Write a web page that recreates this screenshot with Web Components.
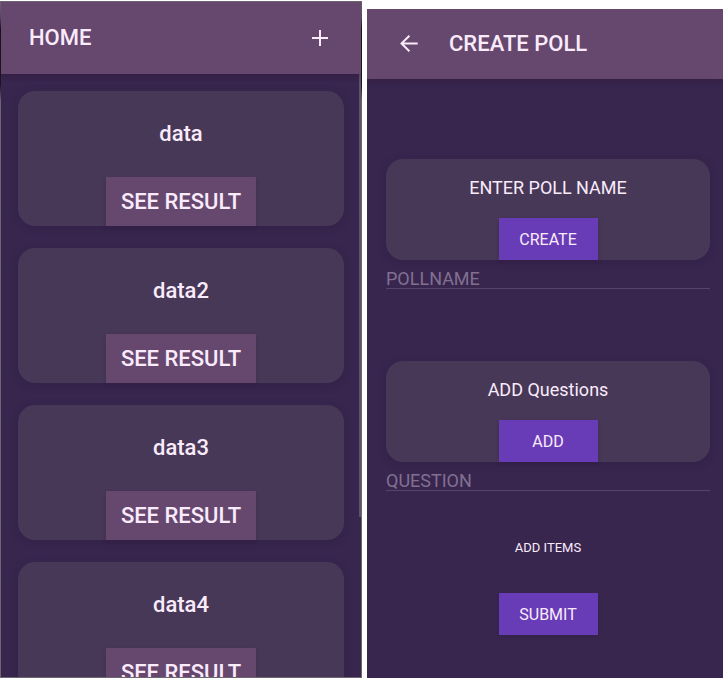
<!DOCTYPE html>
<html lang="en">
<head>
<meta charset="utf-8">
<meta name="viewport" content="width=device-width, initial-scale=1">
<title>Polls</title>
<style>
  body { margin: 0; background: #fff; font-family: Roboto, "Liberation Sans", sans-serif; color: #faebfb; }
</style>
</head>
<body>
<poll-app></poll-app>
<script>
const define = (name, html, setup) => {
  const template = document.createElement('template');
  template.innerHTML = html;
  customElements.define(name, class extends HTMLElement {
    constructor() {
      super();
      this.attachShadow({ mode: 'open' }).append(template.content.cloneNode(true));
    }
    connectedCallback() { if (setup) setup(this, this.shadowRoot); }
  });
};

define('app-bar', `
  <style>
    :host { display: flex; align-items: center; flex: none; box-sizing: border-box; background: #66476e;
            padding: 0 28px; box-shadow: 0 2px 6px rgba(50, 20, 50, .45); position: relative; }
    h1 { margin: 0; flex: 1; font-size: 22px; line-height: 28px; font-weight: 500; }
  </style>
  <slot name="start"></slot><h1><slot></slot></h1><slot name="end"></slot>
`);

define('icon-button', `
  <style>
    :host { display: block; flex: none; }
    button { display: block; margin: 0; padding: 0; border: 0; background: none; color: inherit; cursor: pointer; }
    svg { display: none; width: 26px; height: 26px; fill: none; stroke: currentColor; stroke-width: 2; }
    :host([icon="add"]) .add, :host([icon="back"]) .back { display: block; }
  </style>
  <button type="button">
    <svg class="add" viewBox="0 0 26 26" aria-hidden="true"><path d="M13 5v16M5 13h16"/></svg>
    <svg class="back" viewBox="0 0 26 26" aria-hidden="true"><path d="M22.7 12.5H6.5M14.4 4.7L6.5 12.5l7.9 7.8"/></svg>
  </button>
`, (host, root) => root.querySelector('button').setAttribute('aria-label', host.getAttribute('label')));

define('flat-button', `
  <style>
    :host { display: block; }
    button { display: block; margin: 0; box-sizing: border-box; border: 0; cursor: pointer; font: inherit; color: inherit;
             min-width: 99px; height: 42px; padding: 0 12px; font-size: 16px; background: #683bb7;
             box-shadow: 0 2px 4px rgba(40, 20, 50, .2); }
    :host([kind="result"]) button { height: 49px; padding: 0 15px; font-size: 22px; font-weight: 500; background: #66476e; }
    :host([kind="text"]) button { height: 29px; font-size: 13px; background: none; box-shadow: none; }
  </style>
  <button type="button"><slot></slot></button>
`);

define('poll-card', `
  <style>
    :host { display: flex; flex-direction: column; align-items: center; flex: none; border-radius: 17px;
            background: #473857; box-shadow: 0 2px 8px rgba(40, 20, 50, .25); }
    h2 { margin: 0; padding: 17px 0 18px; font-size: 18px; line-height: 24px; font-weight: 400; }
    :host([large]) h2 { padding: 29px 0; font-size: 22px; line-height: 28px; font-weight: 500; }
  </style>
  <h2><slot></slot></h2>
  <slot name="action"></slot>
`);

define('line-input', `
  <style>
    :host { display: block; }
    input { display: block; width: 100%; height: 29px; box-sizing: border-box; margin: 0; padding: 8px 0 0; border: 0;
            border-bottom: 1px solid #574569; border-radius: 0; background: none; outline: none;
            font: inherit; font-size: 18px; color: inherit; }
    input::placeholder { color: #827091; opacity: 1; }
  </style>
  <input type="text">
`, (host, root) => {
  const input = root.querySelector('input');
  input.placeholder = host.getAttribute('label');
  input.setAttribute('aria-label', input.placeholder);
});

define('home-screen', `
  <style>
    :host { display: flex; flex-direction: column; box-sizing: border-box; min-height: 0; padding: 1px;
            background: linear-gradient(#6b6670, #57475f 16px, #171222 28px, #1b1525 84px, #6b6670 100px); }
    app-bar { height: 72px; z-index: 1; clip-path: inset(0 0 -8px 0); }
    .list { flex: 1; min-height: 0; overflow: hidden; display: grid; grid-template-columns: 1fr 2px; background: #38264f; }
    .cards { display: flex; flex-direction: column; gap: 22px; min-width: 0; padding: 17px 15px 17px 17px; }
    .thumb { height: 443px; background: #5d536c; }
  </style>
  <app-bar>HOME<icon-button slot="end" icon="add" label="Add poll"></icon-button></app-bar>
  <div class="list">
    <div class="cards">
      <poll-card large>data<flat-button slot="action" kind="result">SEE RESULT</flat-button></poll-card>
      <poll-card large>data2<flat-button slot="action" kind="result">SEE RESULT</flat-button></poll-card>
      <poll-card large>data3<flat-button slot="action" kind="result">SEE RESULT</flat-button></poll-card>
      <poll-card large>data4<flat-button slot="action" kind="result">SEE RESULT</flat-button></poll-card>
    </div>
    <div class="thumb"></div>
  </div>
`);

define('create-screen', `
  <style>
    :host { display: flex; flex-direction: column; min-width: 0; background: #38264f; }
    app-bar { height: 70px; clip-path: inset(0 0 -8px 0); }
    icon-button { margin-right: 28px; }
    form { display: flex; flex-direction: column; padding: 80px 13px 40px 19px; }
    line-input { margin-bottom: 72px; }
    line-input.last { margin-bottom: 42px; }
    .row { display: flex; justify-content: center; margin-bottom: 31px; }
  </style>
  <app-bar><icon-button slot="start" icon="back" label="Back"></icon-button>CREATE POLL</app-bar>
  <form>
    <poll-card>ENTER POLL NAME<flat-button slot="action">CREATE</flat-button></poll-card>
    <line-input label="POLLNAME"></line-input>
    <poll-card>ADD Questions<flat-button slot="action">ADD</flat-button></poll-card>
    <line-input class="last" label="QUESTION"></line-input>
    <div class="row"><flat-button kind="text">ADD ITEMS</flat-button></div>
    <div class="row"><flat-button>SUBMIT</flat-button></div>
  </form>
`);

define('poll-app', `
  <style>
    :host { display: grid; grid-template-columns: 362fr 356fr; grid-template-rows: minmax(0, 1fr); column-gap: 5px; height: 100vh; }
    home-screen { margin-top: 1px; }
    create-screen { margin-top: 9px; }
  </style>
  <home-screen></home-screen>
  <create-screen></create-screen>
`);
</script>
</body>
</html>
